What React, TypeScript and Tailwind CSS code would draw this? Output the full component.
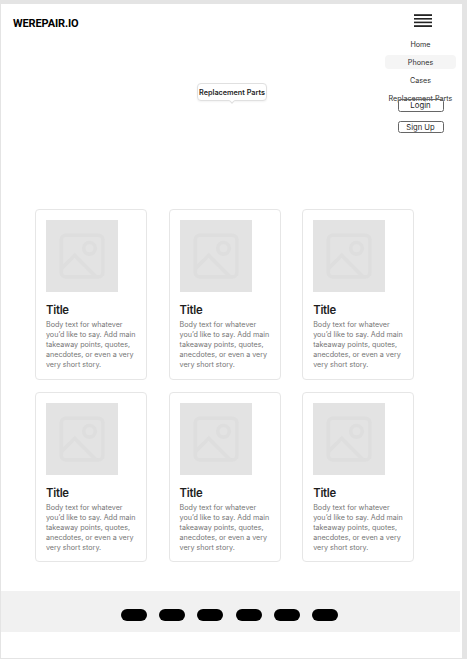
import React from "react";

const cards = [0, 1, 2, 3, 4, 5];
const pills = [0, 1, 2, 3, 4, 5];

function MenuIcon() {
  return (
    <svg className="block h-[14px] w-[18px]" viewBox="0 0 18 14" fill="#242424">
      <rect y="0.2" width="18" height="1.8" />
      <rect y="4" width="18" height="1.6" />
      <rect y="7.6" width="18" height="1.6" />
      <rect y="11.2" width="18" height="1.8" />
    </svg>
  );
}

function Placeholder() {
  return (
    <svg className="block size-[72px] bg-[#e3e3e3]" viewBox="0 0 72 72" fill="none" stroke="#dedede" strokeWidth="3.6">
      <rect x="15.3" y="15.3" width="41.6" height="41.6" rx="4.5" />
      <circle cx="43.5" cy="28.3" r="5.8" />
      <path d="M15.5 48.5L28.7 35.3L50.3 56.9" />
    </svg>
  );
}

function Card() {
  return (
    <article className="h-[170.6px] w-[112px] rounded-[4px] border border-[#e6e6e6] pt-[10px] pl-[9.7px]">
      <Placeholder />
      <h2 className="mt-[10px] h-[15px] text-[11.3px] leading-[16px] font-semibold tracking-[-0.25px] text-[#1e1e1e]">Title</h2>
      <p className="mt-[3px] text-[7.15px] leading-[10px] whitespace-nowrap text-[#757575]">
        Body text for whatever<br />you’d like to say. Add main<br />takeaway points, quotes,<br />anecdotes, or even a very<br />very short story.
      </p>
    </article>
  );
}

export default function App() {
  return (
    <div className="h-[659px] w-[467px] overflow-hidden bg-[#e4e4e4] pt-[4px] pl-px font-['Inter',sans-serif]">
      <div className="flex h-[654px] w-[461px] flex-col bg-white">
        <header className="flex h-[205px] shrink-0">
          <h1 className="mt-[13px] ml-[12px] h-[14px] w-[80px] font-['Roboto',sans-serif] text-[11px] leading-[14px] font-bold tracking-[-0.12px] whitespace-nowrap text-black">
            WEREPAIR.IO
          </h1>
          <div className="relative mt-[79px] ml-[104px] flex h-[18px] w-[70px] items-center justify-center rounded-[4px] border border-[#e0e0e0] bg-white pt-[2px] text-[7.25px] font-semibold whitespace-nowrap text-[#1e1e1e] shadow-xs">
            Replacement Parts
            <span className="absolute -bottom-[2.5px] left-[32px] size-[4px] rotate-45 border-r border-b border-[#e0e0e0] bg-white" />
          </div>
          <nav className="mt-[10px] mr-[6px] ml-auto flex w-[71px] flex-col items-center text-[7.2px] text-[#303030]">
            <div className="ml-[4px]"><MenuIcon /></div>
            <a className="mt-[9px] flex h-[14px] w-full items-center justify-center pt-[2px]">Home</a>
            <a className="mt-[4px] flex h-[14px] w-full items-center justify-center rounded-[4px] bg-[#f5f5f5] pt-[2px]">Phones</a>
            <a className="mt-[4px] flex h-[14px] w-full items-center justify-center pt-[2px]">Cases</a>
            <a className="mt-[4px] flex h-[14px] w-full items-center justify-center pt-[2px] whitespace-nowrap">Replacement Parts</a>
            <button className="-mt-[6px] flex h-[13px] w-[46px] shrink-0 items-center justify-center rounded-[2.5px] border border-[#666] pt-px text-[7.8px] leading-none text-[#1e1e1e]">Login</button>
            <button className="mt-[9px] flex h-[12px] w-[46px] shrink-0 items-center justify-center rounded-[2.5px] border border-[#666] pt-px text-[7.6px] leading-none text-[#1e1e1e]">Sign Up</button>
          </nav>
        </header>
        <main className="ml-[34.3px] grid h-[382.4px] shrink-0 grid-cols-[112px_112px_112px] content-start gap-x-[21.6px] gap-y-[12px]">
          {cards.map((n) => <Card key={n} />)}
        </main>
        <footer className="flex h-[41px] w-[459px] shrink-0 gap-[12.4px] bg-[#f1f1f1] pt-[17.5px] pl-[119.5px]">
          {pills.map((n) => <span key={n} className="h-[12.5px] w-[26px] rounded-full bg-black" />)}
        </footer>
      </div>
    </div>
  );
}
